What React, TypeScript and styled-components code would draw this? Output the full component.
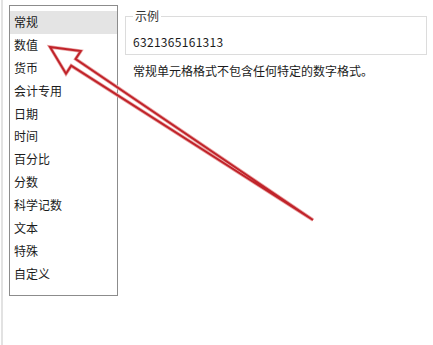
import React from "react";
import styled, { createGlobalStyle } from "styled-components";

const Global = createGlobalStyle`
  html, body { margin: 0; padding: 0; background: #ffffff; }
  body {
    font-family: "Noto Sans CJK SC", "Noto Sans", sans-serif;
    font-size: 12px;
    color: #1b1b1b;
  }
`;

const Page = styled.div`
  position: relative;
  display: flex;
  align-items: flex-start;
  width: 430px;
  height: 345px;
  margin-left: 1px;
  border-left: 2px solid #e2e2e2;
  box-sizing: border-box;
  overflow: hidden;
`;

const ListBox = styled.ul`
  list-style: none;
  margin: 5px 0 0 6px;
  padding: 5px 0 0 0;
  width: 109px;
  height: 291px;
  box-sizing: border-box;
  border: 1px solid #8c8c8c;
  flex: none;
`;

const Item = styled.li<{ $selected?: boolean }>`
  height: 22.9px;
  line-height: 22.9px;
  padding-left: 4px;
  white-space: nowrap;
  background: ${(p) => (p.$selected ? "#e4e4e4" : "transparent")};
  color: #1b1b1b;
`;

const Panel = styled.div`
  display: flex;
  flex-direction: column;
  margin-left: 7px;
  width: 302px;
  flex: none;
`;

const Sample = styled.fieldset`
  margin: 8px 0 0 0;
  padding: 10px 7px 4px 7px;
  border: 1px solid #dcdcdc;
  min-width: 0;
`;

const Legend = styled.legend`
  padding: 0 2px;
  line-height: 16px;
  color: #333333;
`;

const SampleValue = styled.div`
  line-height: 16px;
  letter-spacing: 0.3px;
  color: #1b1b1b;
`;

const Description = styled.div`
  margin: 8px 0 0 8px;
  line-height: 16px;
  color: #1b1b1b;
`;

const Overlay = styled.svg`
  position: absolute;
  left: -3px;
  top: 0;
  width: 433px;
  height: 345px;
  pointer-events: none;
`;

const categories = [
  "常规",
  "数值",
  "货币",
  "会计专用",
  "日期",
  "时间",
  "百分比",
  "分数",
  "科学记数",
  "文本",
  "特殊",
  "自定义",
];

function arrowPoints() {
  const tip = [50, 47];
  const tail = [313, 220];
  const dx = tail[0] - tip[0];
  const dy = tail[1] - tip[1];
  const len = Math.hypot(dx, dy);
  const u = [dx / len, dy / len];
  const n = [-u[1], u[0]];
  const headLen = 28;
  const headHalf = 13.5;
  const shaftHalf = 4;
  const base = [tip[0] + u[0] * headLen, tip[1] + u[1] * headLen];
  const p = (x: number, y: number) => `${x.toFixed(1)},${y.toFixed(1)}`;
  const A = p(base[0] - n[0] * headHalf, base[1] - n[1] * headHalf);
  const C = p(base[0] - n[0] * shaftHalf, base[1] - n[1] * shaftHalf);
  const D = p(base[0] + n[0] * shaftHalf, base[1] + n[1] * shaftHalf);
  const B = p(base[0] + n[0] * headHalf, base[1] + n[1] * headHalf);
  return [p(tip[0], tip[1]), A, C, p(tail[0], tail[1]), D, B].join(" ");
}

export default function App() {
  const pts = arrowPoints();
  return (
    <>
      <Global />
      <Page>
        <ListBox>
          {categories.map((c, i) => (
            <Item key={c} $selected={i === 0}>
              {c}
            </Item>
          ))}
        </ListBox>
        <Panel>
          <Sample>
            <Legend>示例</Legend>
            <SampleValue>6321365161313</SampleValue>
          </Sample>
          <Description>常规单元格格式不包含任何特定的数字格式。</Description>
        </Panel>
        <Overlay viewBox="0 0 433 345">
          <polygon
            points={pts}
            fill="none"
            stroke="#eaa3a3"
            strokeWidth={3.4}
            strokeLinejoin="miter"
          />
          <polygon
            points={pts}
            fill="none"
            stroke="#c0232a"
            strokeWidth={2}
            strokeLinejoin="miter"
          />
        </Overlay>
      </Page>
    </>
  );
}
